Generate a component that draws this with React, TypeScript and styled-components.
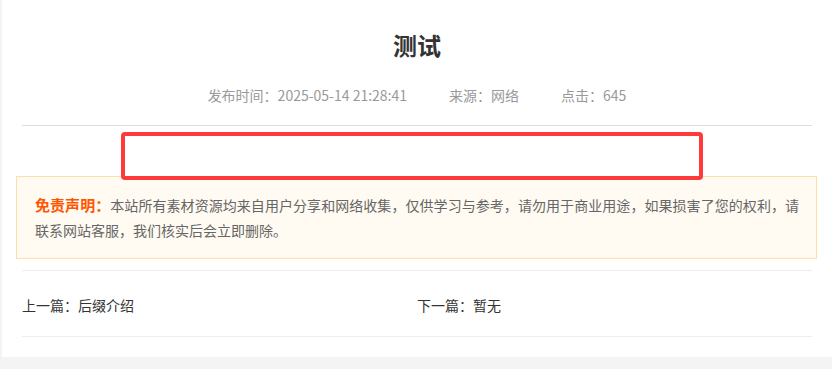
import React from "react";
import styled, { createGlobalStyle } from "styled-components";

const GlobalStyle = createGlobalStyle`
  html, body {
    margin: 0;
    padding: 0;
    background: #f4f4f4;
    font-family: "Microsoft YaHei", "Noto Sans CJK SC", "Noto Sans", sans-serif;
  }
  * { box-sizing: border-box; }
`;

const Card = styled.article`
  margin-left: 2px;
  width: 830px;
  background: #fff;
  padding: 27px 20px 20px;
`;

const Title = styled.h1`
  margin: 0;
  font-size: 24px;
  line-height: 36px;
  font-weight: 700;
  color: #333;
  text-align: center;
`;

const Meta = styled.div`
  margin-top: 22px;
  display: flex;
  justify-content: center;
  font-size: 14px;
  line-height: 20px;
  color: #999;
`;

const MetaItem = styled.span`
  margin: 0 21px;
  white-space: nowrap;
`;

const Rule = styled.hr<{ $tone: string }>`
  margin: 0;
  border: 0;
  height: 1px;
  background: ${(p) => p.$tone};
`;

const HeadRule = styled(Rule)`
  margin-top: 20px;
`;

const Content = styled.div`
  position: relative;
  height: 50px;
`;

const Highlight = styled.div`
  position: absolute;
  z-index: 2;
  top: 6px;
  left: 99px;
  width: 582px;
  height: 48px;
  border: 4px solid #ff3a3a;
  border-radius: 4px;
`;

const Notice = styled.div`
  margin: 0 -5px 0 -6px;
  padding: 15px 17px 15px 18px;
  background: #fffaf2;
  border: 1px solid #ffdfa8;
  font-size: 14px;
  line-height: 25px;
  color: #666;
  text-align: justify;
`;

const NoticeLabel = styled.strong`
  font-size: 15px;
  font-weight: 700;
  color: #ff5500;
`;

const NavRule = styled(Rule)`
  margin-top: 11px;
`;

const Nav = styled.nav`
  display: grid;
  grid-template-columns: 1fr 1fr;
  padding: 24px 0 21px;
  font-size: 14px;
  line-height: 20px;
  color: #333;
`;

const NavLink = styled.a`
  color: #333;
  text-decoration: none;
`;

export default function App() {
  return (
    <>
      <GlobalStyle />
      <Card>
        <Title>测试</Title>
        <Meta>
          <MetaItem>发布时间：2025-05-14 21:28:41</MetaItem>
          <MetaItem>来源：网络</MetaItem>
          <MetaItem>点击：645</MetaItem>
        </Meta>
        <HeadRule $tone="#dddddd" />
        <Content>
          <Highlight />
        </Content>
        <Notice>
          <NoticeLabel>免责声明：</NoticeLabel>
          本站所有素材资源均来自用户分享和网络收集，仅供学习与参考，请勿用于商业用途，如果损害了您的权利，请联系网站客服，我们核实后会立即删除。
        </Notice>
        <NavRule $tone="#eeeeee" />
        <Nav>
          <NavLink href="#">上一篇：后缀介绍</NavLink>
          <span>下一篇：暂无</span>
        </Nav>
        <Rule $tone="#eeeeee" />
      </Card>
    </>
  );
}
